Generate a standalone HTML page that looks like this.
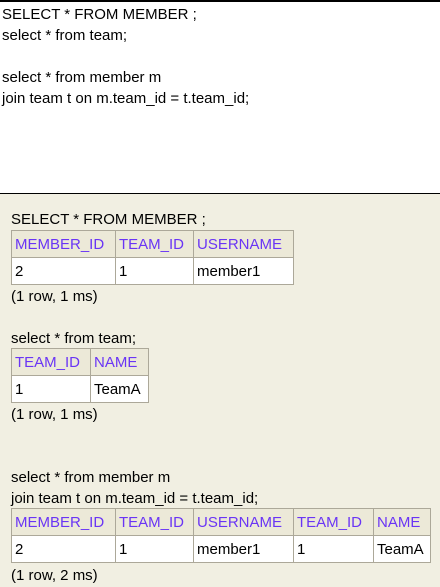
<!DOCTYPE html>
<html><head><style>
body{margin:0;width:440px;height:587px;overflow:hidden;background:#f1efe2;font-family:"Liberation Sans",Arial,sans-serif;font-size:15px;color:#000;position:relative}
.top{position:absolute;left:0;top:0;width:440px;height:194px;background:#fff;border-top:2px solid #000;border-bottom:1px solid #000;box-sizing:border-box}
.t{position:absolute;white-space:pre;line-height:21px}
table{position:absolute;border-collapse:collapse;left:11px}
td,th{border:1px solid #aca899;padding:1px 3px 0;height:27px;text-align:left;font-weight:normal;white-space:nowrap;box-sizing:border-box}
th{background:#ece9d8;color:#6a35f5}
td{background:#fff}
</style></head><body>
<div class="top"></div>
<div class="t" style="left:2px;top:4px">SELECT * FROM MEMBER ;
select * from team;

select * from member m
join team t on m.team_id = t.team_id;</div>

<div class="t" style="left:11px;top:209px">SELECT * FROM MEMBER ;</div>
<table style="top:230px;width:283px">
<tr><th style="width:104px">MEMBER_ID</th><th style="width:78px">TEAM_ID</th><th>USERNAME</th></tr>
<tr><td>2</td><td>1</td><td>member1</td></tr></table>
<div class="t" style="left:11px;top:286px">(1 row, 1 ms)</div>

<div class="t" style="left:11px;top:328px">select * from team;</div>
<table style="top:348px;width:138px">
<tr><th style="width:79px">TEAM_ID</th><th>NAME</th></tr>
<tr><td>1</td><td>TeamA</td></tr></table>
<div class="t" style="left:11px;top:404px">(1 row, 1 ms)</div>

<div class="t" style="left:11px;top:467px">select * from member m
join team t on m.team_id = t.team_id;</div>
<table style="top:508px;width:420px">
<tr><th style="width:104px">MEMBER_ID</th><th style="width:78px">TEAM_ID</th><th style="width:100px">USERNAME</th><th style="width:80px">TEAM_ID</th><th>NAME</th></tr>
<tr><td>2</td><td>1</td><td>member1</td><td>1</td><td>TeamA</td></tr></table>
<div class="t" style="left:11px;top:565px">(1 row, 2 ms)</div>
</body></html>
